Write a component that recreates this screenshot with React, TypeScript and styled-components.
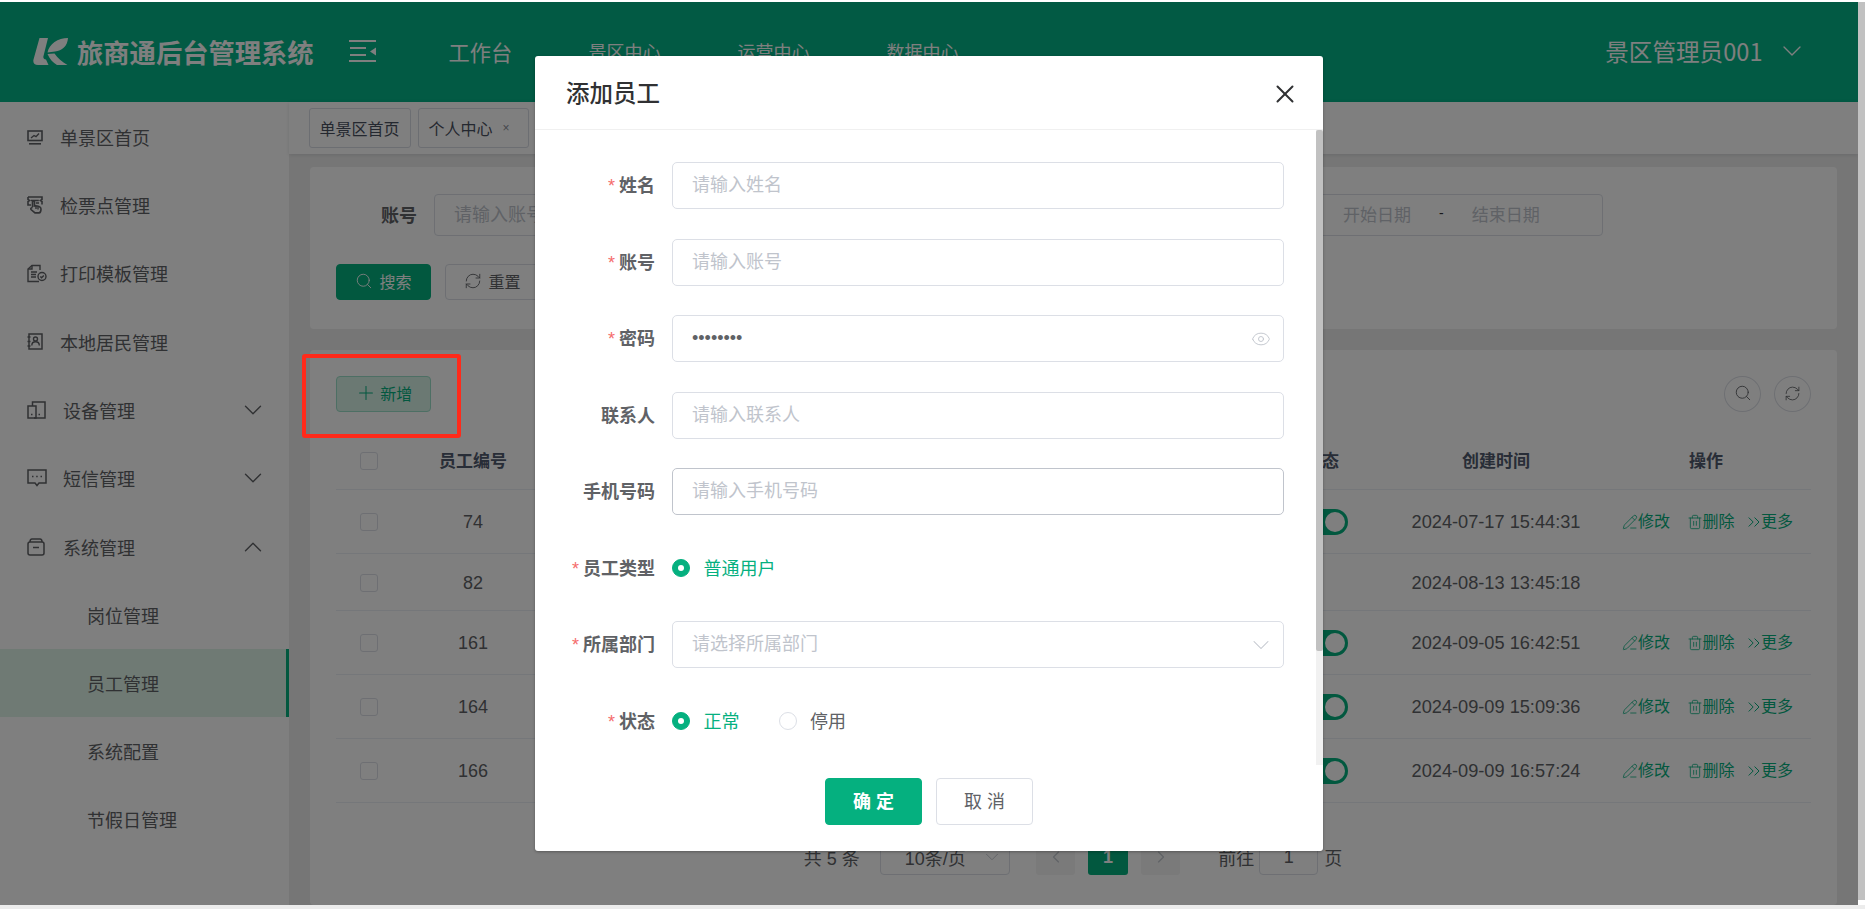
import React from "react";
import styled, { createGlobalStyle } from "styled-components";
import { ChevronDown, ChevronUp, ChevronLeft, ChevronRight, ChevronsRight, Eye, PencilLine, Plus, RefreshCw, Search, Trash2, X } from "lucide-react";

const GREEN = "#05b07f";
const FONT = '"Liberation Sans", "Noto Sans CJK SC", sans-serif';

const Global = createGlobalStyle`
  html, body { margin: 0; height: 100%; overflow: hidden; background: #fff; }
  #root { height: 100%; }
  * { box-sizing: border-box; }
  input::placeholder { color: #c0c4cc; opacity: 1; }
`;

const Page = styled.div`
  height: 909px; width: 1865px; display: flex; flex-direction: column; font-family: ${FONT}; color: #606266; overflow: hidden;
`;
const TopGap = styled.div`height: 2px; background: #fff; flex: none;`;
const Middle = styled.div`height: 903px; display: flex; flex: none;`;
const BottomBar = styled.div`flex: 1; background: #ececec;`;
const PageScroll = styled.div`width: 7.5px; flex: none; background: #fff;`;
const PageThumb = styled.div`height: 898px; background: #c1c1c1;`;
const Frame = styled.div`position: relative; flex: 1; min-width: 0; display: flex; flex-direction: column; overflow: hidden;`;

const Header = styled.header`
  height: 100px; flex: none; background: #04b488; display: flex; align-items: center; color: #fff; padding: 0 50px 2px 0;
`;
const Brand = styled.div`width: 349px; padding-left: 33px; display: flex; align-items: center; gap: 9px; flex: none;`;
const BrandTitle = styled.div`font-size: 26.3px; font-weight: 700; white-space: nowrap; font-family: "Noto Sans CJK SC", sans-serif;`;
const Collapse = styled.svg`width: 27px; height: 24px; margin-right: 72.5px; flex: none;`;
const TopNav = styled.nav`display: flex; align-items: center; gap: 77px;`;
const TopNavItem = styled.span<{ $active?: boolean }>`
  font-size: ${p => (p.$active ? "21.2px" : "18px")}; white-space: nowrap; ${p => p.$active ? "margin-right: -0.5px;" : ""}
`;
const UserBox = styled.div`margin-left: auto; display: flex; align-items: center; gap: 13px; font-size: 23.6px; font-family: "Noto Sans CJK SC", sans-serif; white-space: nowrap;`;

const Body = styled.div`flex: 1; display: flex; min-height: 0;`;
const Sidebar = styled.aside`width: 289px; flex: none; background: #fff; padding-top: 1px;`;
const MenuItem = styled.div<{ $active?: boolean; $child?: boolean; $nudge?: boolean }>`
  height: 68.2px; display: flex; align-items: center; font-size: 18px; color: #606266; white-space: nowrap;
  padding-left: ${p => (p.$child ? "87px" : "27px")}; padding-right: 21px;
  background: ${p => (p.$active ? "#def4e8" : "transparent")};
  border-right: ${p => (p.$active ? `3px solid ${GREEN}` : "0")};
  padding-top: ${p => (p.$nudge ? "2px" : "0")};
`;
const MenuIcon = styled.span<{ $wide?: boolean }>`
  width: ${p => (p.$wide ? "36px" : "33px")}; flex: none; display: flex; align-items: center;
`;
const MenuArrow = styled.span`margin-left: auto; display: flex;`;
const IconSvg = styled.svg`fill: none; stroke: currentColor; stroke-width: 1.4; display: block;`;

const Content = styled.main`flex: 1; min-width: 0; display: flex; flex-direction: column; background: #ededed;`;
const TabBar = styled.div`
  height: 52px; flex: none; background: #fff; padding: 6px 0 0 19.5px; display: flex; gap: 7px; box-shadow: 0 1px 4px rgba(0,21,41,.12); align-items: flex-start;
`;
const Tab = styled.div`
  height: 40px; border: 1px solid #d8dce5; border-radius: 3px; font-size: 16px; color: #495060; padding: 0 10px; display: flex; align-items: center; gap: 10px; white-space: nowrap;
`;
const TabClose = styled.span`font-size: 12px; color: #8a8f99; margin-right: 8px;`;
const Scroller = styled.div`flex: 1; padding: 13px 20.5px 0 20.5px; display: flex; flex-direction: column; gap: 21px; min-height: 0;`;
const Card = styled.section`background: #fff; border-radius: 4px; flex: none;`;
const FilterCard = styled(Card)`height: 162px; padding: 27px 234px 0 26.5px;`;
const FilterRow = styled.div`display: flex; align-items: center; justify-content: space-between;`;
const FilterField = styled.div`display: flex; align-items: center; gap: 17px;`;
const FilterLabel = styled.label`width: 81px; text-align: right; font-size: 18px; font-weight: 700; padding-bottom: 2px;`;
const FilterInput = styled.input`
  width: 330px; height: 42px; border: 1px solid #dcdfe6; border-radius: 4px; padding: 0 19px; font: 18px ${FONT}; background: #fff; outline: none;
`;
const DateRange = styled.div`
  height: 42px; width: 300px; border: 1px solid #dcdfe6; border-radius: 4px; padding: 0 0 4px 39px; display: flex; align-items: center; gap: 28px; font-size: 17px; color: #c0c4cc;
`;
const DateDash = styled.span`color: #303133; font-size: 14px;`;
const ActionRow = styled.div`display: flex; gap: 14px; margin-top: 28px;`;
const ToolButton = styled.button<{ $kind?: "primary" | "plain" | "soft" }>`
  width: 95px; height: 36px; border-radius: 4px; font: 16px ${FONT}; display: flex; align-items: center; justify-content: center; gap: ${p => (p.$kind === "soft" ? "3.5px" : "6px")}; padding: 0 0 2px;
  border: 1px solid ${p => (p.$kind === "primary" ? GREEN : p.$kind === "soft" ? "#9bdfc8" : "#dcdfe6")};
  background: ${p => (p.$kind === "primary" ? GREEN : p.$kind === "soft" ? "#d6f2e7" : "#fff")};
  color: ${p => (p.$kind === "primary" ? "#fff" : p.$kind === "soft" ? GREEN : "#606266")};
`;
const TableCard = styled(Card)`flex: 1; padding: 26px 26px 0 26.5px;`;
const TableTools = styled.div`height: 36px; display: flex; justify-content: space-between; margin-bottom: 18px;`;
const CircleGroup = styled.div`display: flex; gap: 13px;`;
const CircleButton = styled.button`
  width: 37px; height: 36px; border-radius: 50%; border: 1px solid #dcdfe6; background: #fff; color: #606266; display: flex; align-items: center; justify-content: center; padding: 0 0 2px;
`;
const Row = styled.div<{ $head?: boolean; $compact?: boolean }>`
  display: grid; grid-template-columns: 65px 144px 1fr 138px 210px 210px; align-items: center; border-bottom: 1px solid #ebeef5;
  padding: ${p => (p.$head ? "21.5px 0 17.5px" : p.$compact ? "19px 0 17px" : "18px 0")}; font-size: ${p => (p.$head ? "17px" : "18px")};
  font-weight: ${p => (p.$head ? 700 : 400)}; color: ${p => (p.$head ? "#515a6e" : "#606266")};
  line-height: 20px; min-height: 57px;
`;
const Cell = styled.div`text-align: center; white-space: nowrap; min-width: 0;`;
const TimeCell = styled(Cell)`font-size: 18.2px;`;
const CheckCell = styled(Cell)<{ $lift?: number }>`margin-top: ${p => (p.$lift ? `-${p.$lift}px` : 0)};`;
const Checkbox = styled.span`display: block; width: 18px; height: 18px; border: 1px solid #dcdfe6; border-radius: 3px; background: #fff; margin: 0 auto;`;
const Switch = styled.span`
  display: block; width: 52px; height: 26px; margin: 1px auto 0; border-radius: 13px; background: ${GREEN}; position: relative;
  &::after { content: ""; position: absolute; right: 3px; top: 3px; width: 20px; height: 20px; border-radius: 50%; background: #fff; }
`;
const Actions = styled.div`display: flex; align-items: center; padding-left: 21px; gap: 11.5px; height: 27px;`;
const ActionLink = styled.span<{ $extra?: boolean }>`
  display: flex; align-items: center; color: ${GREEN}; font-size: 16px; ${p => (p.$extra ? "margin-right: 5px;" : "")}
`;
const DoubleArrow = styled(ChevronsRight)`margin: 0 -2.500px 0 -2.500px;`;
const Pager = styled.div`display: flex; align-items: center; justify-content: center; margin: 36px 1px 0 0; font-size: 18px; height: 36px;`;
const PagerText = styled.span<{ $gap?: number; $lead?: number }>`white-space: nowrap; margin-right: ${p => p.$gap ?? 0}px; margin-left: ${p => p.$lead ?? 0}px;`;
const PagerSelect = styled.div`
  width: 130px; height: 36px; border: 1px solid #dcdfe6; border-radius: 4px; display: flex; align-items: center; justify-content: space-between; padding: 0 6px 0 24px; margin-right: 26px; color: #606266; white-space: nowrap;
`;
const PageBtn = styled.div<{ $current?: boolean }>`
  width: 39.5px; height: 36px; border-radius: 3px; margin-right: 13px; display: flex; align-items: center; justify-content: center; font-weight: 700;
  background: ${p => (p.$current ? GREEN : "#f4f4f5")}; color: ${p => (p.$current ? "#fff" : "#c0c4cc")};
`;
const PagerInput = styled.div`width: 59px; height: 36px; border: 1px solid #dcdfe6; border-radius: 4px; margin: 0 6px 0 5px; display: flex; align-items: center; justify-content: center;`;

const Overlay = styled.div`position: absolute; inset: 0; background: rgba(0,0,0,.5);`;
const Annotation = styled.div`
  position: absolute; left: 302px; top: 352px; width: 159px; height: 84px; border: 4px solid #ff2a1a; border-radius: 3px;
`;
const Modal = styled.div`
  position: absolute; left: 535px; top: 54px; width: 788px; height: 795px; background: #fff; border-radius: 3px; display: flex; flex-direction: column;
  box-shadow: 0 1px 3px rgba(0,0,0,.3);
`;
const ModalHead = styled.div`
  height: 74px; flex: none; border-bottom: 1px solid #f0f0f0; display: flex; align-items: center; justify-content: space-between; padding: 0 23px 0 31px;
`;
const ModalTitle = styled.h2`margin: -1px 0 0; font-size: 23.5px; font-weight: 500; color: #303133; font-family: "Noto Sans CJK SC", sans-serif;`;
const CloseIcon = styled(X)`margin-top: 2px;`;
const ModalBody = styled.div`height: 635px; flex: none; display: flex;`;
const FormColumn = styled.div`flex: 1; padding-top: 32px; min-width: 0;`;
const FormRow = styled.div`height: 47px; margin-bottom: 29.5px; display: flex; align-items: center; gap: 17px;`;
const FormLabel = styled.label`width: 120px; flex: none; text-align: right; font-size: 18px; font-weight: 700; color: #606266; white-space: nowrap; padding-bottom: 3px;`;
const Star = styled.span`color: #f56c6c; font-weight: 400; margin-right: 4px; font-size: 18px;`;
const FieldBox = styled.div<{ $hover?: boolean }>`
  width: 612px; height: 47px; border: 1px solid ${p => (p.$hover ? "#c0c4cc" : "#dcdfe6")}; border-radius: 5px; display: flex; align-items: center; padding: 0 12px 0 19px; background: #fff;
`;
const FieldInput = styled.input`
  flex: 1; min-width: 0; border: 0; outline: none; padding: 0; font: 18px ${FONT}; color: #606266; background: transparent;
`;
const FieldIcon = styled.span<{ $overhang?: boolean }>`display: flex; color: #c0c4cc; ${p => (p.$overhang ? "margin-right: -4px;" : "")}`;
const RadioGroup = styled.div`display: flex; align-items: center; gap: 39px;`;
const RadioOption = styled.div<{ $on?: boolean }>`
  display: flex; align-items: center; gap: 13.5px; font-size: 18px; color: ${p => (p.$on ? GREEN : "#606266")};
`;
const RadioText = styled.span`padding-bottom: 3px;`;
const RadioMark = styled.span<{ $on?: boolean }>`
  width: 18px; height: 18px; border-radius: 50%; flex: none; display: flex; align-items: center; justify-content: center;
  background: ${p => (p.$on ? GREEN : "#fff")}; border: 1px solid ${p => (p.$on ? GREEN : "#dcdfe6")};
  &::after { content: ""; width: 6px; height: 6px; border-radius: 50%; background: #fff; }
`;
const ScrollTrack = styled.div`width: 7.5px; flex: none; background: #f1f1f1;`;
const ScrollThumb = styled.div`height: 521px; background: #c1c1c1; border-radius: 2px;`;
const ModalFoot = styled.div`flex: 1; padding-top: 13px; display: flex; justify-content: center; gap: 14.5px;`;
const FootButton = styled.button<{ $primary?: boolean }>`
  width: 96.5px; height: 47px; border-radius: 4px; font: 18px ${FONT}; letter-spacing: 5px; padding: 0 0 3px 5px;
  border: 1px solid ${p => (p.$primary ? GREEN : "#dcdfe6")}; background: ${p => (p.$primary ? GREEN : "#fff")};
  color: ${p => (p.$primary ? "#fff" : "#606266")}; font-weight: ${p => (p.$primary ? 700 : 400)};
`;

const Logo = () => (
  <svg width="35" height="27" viewBox="0 0 35 27" fill="#fff">
    <path d="M6.500 0h8.500L10.500 18c-.6 2 .4 3.200 2.500 3.600L15.500 27H5c-3.500 0-5.300-2-4.500-5.500Z" />
    <path d="M35 0c-.5 8-6 13-13 13.500l-7.500 1C16 6 25 0 35 0Z" />
    <path d="M14.500 16l7-.5c3 4.500 7.500 8.500 13 11.500H24c-4-2.500-7-5.500-9.500-11Z" />
  </svg>
);
const Hamburger = () => (
  <Collapse viewBox="0 0 27 24" fill="#fff">
    <rect x="0" y="1" width="27" height="2" /><rect x="1" y="8" width="16" height="2" /><rect x="1" y="15" width="16" height="2" /><rect x="0" y="21" width="27" height="2" />
    <path d="M27 8.500v8l-6-4Z" />
  </Collapse>
);
const I1 = () => (
  <IconSvg width="16" height="15" viewBox="0 0 16 15">
    <rect x="1" y="1" width="14" height="9.500" strokeWidth="1.6" /><path d="M4 8l3-2.500 2 1.200L12 3.500" /><path d="M2 13.800h12" strokeWidth="1.6" />
  </IconSvg>
);
const I2 = () => (
  <IconSvg width="16" height="18" viewBox="0 0 16 18">
    <path d="M1 1h14v2.500l-1.500 1 1.500 1V8.500M4 9H1V5.500l1.500-1L1 3.500V1" strokeWidth="1.600" />
    <path d="M3.800 4.500h8M9 7h3" />
    <path d="M5.500 11V6c0-1.500 2-1.500 2 0v4l1-.3 1.800.3 1.700.4c1.300.4 2 1.300 2 2.600 0 2-.6 3.900-2 3.900H8L4 13.500c-.7-1.200.5-2.200 1.500-1.500" strokeWidth="1.600" />
    <path d="M9 10v3M11 10.500v3" />
  </IconSvg>
);
const I3 = () => (
  <IconSvg width="20" height="19" viewBox="0 0 20 19">
    <path d="M13 6V1.500H5L1 5v12.500h11" /><path d="M1 5h4V1.500" /><path d="M4 8h6M4 10.500h5M4 13h5" /><circle cx="15" cy="12.500" r="4" /><path d="M13.300 12.500l1.300 1.300 2.200-2.300" />
  </IconSvg>
);
const I4 = () => (
  <IconSvg width="16" height="17" viewBox="0 0 16 17">
    <rect x="2" y="1" width="13" height="15" strokeWidth="1.500" /><circle cx="8.500" cy="6" r="2" /><path d="M4.800 12.500c0-5 7.500-5 7.500 0" /><path d="M.5 4h3M.5 8.500h3M.5 13h3" />
  </IconSvg>
);
const I5 = () => (
  <IconSvg width="19" height="18" viewBox="0 0 19 18">
    <path d="M5.500 5V1h12.500v16H7" strokeWidth="1.500" /><rect x="1" y="5" width="8" height="12" strokeWidth="1.500" /><path d="M4 13.500h1.500M11.500 13.500H13" />
  </IconSvg>
);
const I6 = () => (
  <IconSvg width="20" height="18" viewBox="0 0 20 18">
    <path d="M1 1h18v13h-7l-2 2.500L8 14H1Z" strokeWidth="1.500" /><path d="M5 7.500h1.500M9.200 7.500h1.500M13.500 7.500H15" />
  </IconSvg>
);
const I7 = () => (
  <IconSvg width="18" height="18" viewBox="0 0 18 18">
    <rect x="1" y="4" width="16" height="13" rx="2" strokeWidth="1.500" /><path d="M3 4c0-2 1-3 2-3h8c1 0 2 1 2 3" strokeWidth="1.500" /><path d="M6 9.500h6" strokeWidth="1.500" />
  </IconSvg>
);

const menu = [
  { label: "单景区首页", icon: <I1 /> },
  { label: "检票点管理", icon: <I2 /> },
  { label: "打印模板管理", icon: <I3 /> },
  { label: "本地居民管理", icon: <I4 /> },
  { label: "设备管理", icon: <I5 />, arrow: "down" },
  { label: "短信管理", icon: <I6 />, arrow: "down" },
  { label: "系统管理", icon: <I7 />, arrow: "up", nudge: true },
  { label: "岗位管理", child: true, nudge: true },
  { label: "员工管理", child: true, active: true },
  { label: "系统配置", child: true },
  { label: "节假日管理", child: true },
];

const rows = [
  { id: "74", time: "2024-07-17 15:44:31", on: true },
  { id: "82", time: "2024-08-13 13:45:18", on: false },
  { id: "161", time: "2024-09-05 16:42:51", on: true },
  { id: "164", time: "2024-09-09 15:09:36", on: true },
  { id: "166", time: "2024-09-09 16:57:24", on: true },
];

export default function App() {
  return (
    <Page>
      <Global />
      <TopGap />
      <Middle>
        <Frame>
          <Header>
            <Brand><Logo /><BrandTitle>旅商通后台管理系统</BrandTitle></Brand>
            <Hamburger />
            <TopNav>
              <TopNavItem $active>工作台</TopNavItem>
              <TopNavItem>景区中心</TopNavItem>
              <TopNavItem>运营中心</TopNavItem>
              <TopNavItem>数据中心</TopNavItem>
            </TopNav>
            <UserBox>景区管理员001<ChevronDown size={32} strokeWidth={1} /></UserBox>
          </Header>
          <Body>
            <Sidebar>
              {menu.map(m => (
                <MenuItem key={m.label} $active={m.active} $child={m.child} $nudge={m.nudge}>
                  {m.icon && <MenuIcon $wide={!!m.arrow}>{m.icon}</MenuIcon>}
                  {m.label}
                  {m.arrow && (
                    <MenuArrow>{m.arrow === "up" ? <ChevronUp size={30} strokeWidth={1.1} /> : <ChevronDown size={30} strokeWidth={1.1} />}</MenuArrow>
                  )}
                </MenuItem>
              ))}
            </Sidebar>
            <Content>
              <TabBar>
                <Tab>单景区首页</Tab>
                <Tab>个人中心<TabClose>×</TabClose></Tab>
              </TabBar>
              <Scroller>
                <FilterCard>
                  <FilterRow>
                    <FilterField>
                      <FilterLabel>账号</FilterLabel>
                      <FilterInput placeholder="请输入账号" readOnly />
                    </FilterField>
                    <DateRange>
                      <span>开始日期</span><DateDash>-</DateDash><span>结束日期</span>
                    </DateRange>
                  </FilterRow>
                  <ActionRow>
                    <ToolButton $kind="primary"><Search size={18} strokeWidth={1.2} />搜索</ToolButton>
                    <ToolButton><RefreshCw size={18} strokeWidth={1.2} />重置</ToolButton>
                  </ActionRow>
                </FilterCard>
                <TableCard>
                  <TableTools>
                    <ToolButton $kind="soft"><Plus size={22} strokeWidth={1.1} />新增</ToolButton>
                    <CircleGroup>
                      <CircleButton><Search size={18} strokeWidth={1.2} /></CircleButton>
                      <CircleButton><RefreshCw size={17} strokeWidth={1.2} /></CircleButton>
                    </CircleGroup>
                  </TableTools>
                  <Row $head>
                    <CheckCell $lift={2}><Checkbox /></CheckCell><Cell>员工编号</Cell><Cell />
                    <Cell>状态</Cell><Cell>创建时间</Cell><Cell>操作</Cell>
                  </Row>
                  {rows.map(r => (
                    <Row key={r.id} $compact={!r.on}>
                      <Cell><Checkbox /></Cell>
                      <Cell>{r.id}</Cell>
                      <Cell />
                      <Cell>{r.on && <Switch />}</Cell>
                      <TimeCell>{r.time}</TimeCell>
                      <Cell>
                        {r.on && (
                          <Actions>
                            <ActionLink $extra><PencilLine size={16} strokeWidth={1.2} />修改</ActionLink>
                            <ActionLink><Trash2 size={16} strokeWidth={1.2} />删除</ActionLink>
                            <ActionLink><DoubleArrow size={20} strokeWidth={1.2} />更多</ActionLink>
                          </Actions>
                        )}
                      </Cell>
                    </Row>
                  ))}
                  <Pager>
                    <PagerText $gap={20}>共 5 条</PagerText>
                    <PagerSelect>10条/页<ChevronDown size={22} strokeWidth={1} color="#c0c4cc" /></PagerSelect>
                    <PageBtn><ChevronLeft size={20} strokeWidth={1.4} /></PageBtn>
                    <PageBtn $current>1</PageBtn>
                    <PageBtn><ChevronRight size={20} strokeWidth={1.4} /></PageBtn>
                    <PagerText $lead={25}>前往</PagerText>
                    <PagerInput>1</PagerInput>
                    <PagerText>页</PagerText>
                  </Pager>
                </TableCard>
              </Scroller>
            </Content>
          </Body>
          <Overlay />
          <Annotation />
          <Modal>
            <ModalHead>
              <ModalTitle>添加员工</ModalTitle>
              <CloseIcon size={30} strokeWidth={1.6} color="#303133" />
            </ModalHead>
            <ModalBody>
              <FormColumn>
                <FormRow><FormLabel><Star>*</Star>姓名</FormLabel><FieldBox><FieldInput placeholder="请输入姓名" readOnly /></FieldBox></FormRow>
                <FormRow><FormLabel><Star>*</Star>账号</FormLabel><FieldBox><FieldInput placeholder="请输入账号" readOnly /></FieldBox></FormRow>
                <FormRow>
                  <FormLabel><Star>*</Star>密码</FormLabel>
                  <FieldBox><FieldInput type="password" defaultValue="12345678" readOnly /><FieldIcon><Eye size={20} strokeWidth={1.1} /></FieldIcon></FieldBox>
                </FormRow>
                <FormRow><FormLabel>联系人</FormLabel><FieldBox><FieldInput placeholder="请输入联系人" readOnly /></FieldBox></FormRow>
                <FormRow><FormLabel>手机号码</FormLabel><FieldBox $hover><FieldInput placeholder="请输入手机号码" readOnly /></FieldBox></FormRow>
                <FormRow>
                  <FormLabel><Star>*</Star>员工类型</FormLabel>
                  <RadioGroup><RadioOption $on><RadioMark $on /><RadioText>普通用户</RadioText></RadioOption></RadioGroup>
                </FormRow>
                <FormRow>
                  <FormLabel><Star>*</Star>所属部门</FormLabel>
                  <FieldBox><FieldInput placeholder="请选择所属部门" readOnly /><FieldIcon $overhang><ChevronDown size={28} strokeWidth={0.9} /></FieldIcon></FieldBox>
                </FormRow>
                <FormRow>
                  <FormLabel><Star>*</Star>状态</FormLabel>
                  <RadioGroup>
                    <RadioOption $on><RadioMark $on /><RadioText>正常</RadioText></RadioOption>
                    <RadioOption><RadioMark /><RadioText>停用</RadioText></RadioOption>
                  </RadioGroup>
                </FormRow>
              </FormColumn>
              <ScrollTrack><ScrollThumb /></ScrollTrack>
            </ModalBody>
            <ModalFoot>
              <FootButton $primary>确定</FootButton>
              <FootButton>取消</FootButton>
            </ModalFoot>
          </Modal>
        </Frame>
        <PageScroll><PageThumb /></PageScroll>
      </Middle>
      <BottomBar />
    </Page>
  );
}
